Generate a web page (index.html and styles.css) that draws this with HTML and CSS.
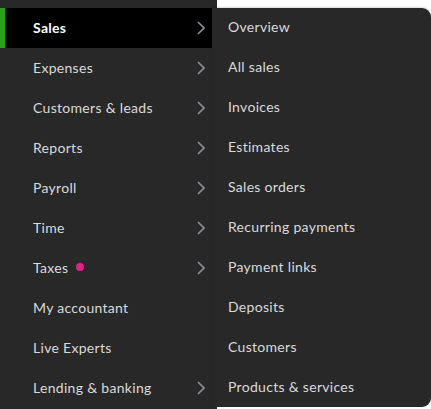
FILE: index.html
```html
<!DOCTYPE html>
<html lang="en">
<head>
  <meta charset="UTF-8">
  <meta name="viewport" content="width=device-width, initial-scale=1.0">
  <title>Navigation</title>
  <link rel="stylesheet" href="styles.css">
</head>
<body>
  <div class="page">
    <nav class="sidebar">
      <div class="nav-item active"><span class="label">Sales</span><svg class="chev" viewBox="0 0 8 14"><path d="M1 1l6 6-6 6"/></svg></div>
      <div class="nav-item"><span class="label">Expenses</span><svg class="chev" viewBox="0 0 8 14"><path d="M1 1l6 6-6 6"/></svg></div>
      <div class="nav-item"><span class="label">Customers &amp; leads</span><svg class="chev" viewBox="0 0 8 14"><path d="M1 1l6 6-6 6"/></svg></div>
      <div class="nav-item"><span class="label">Reports</span><svg class="chev" viewBox="0 0 8 14"><path d="M1 1l6 6-6 6"/></svg></div>
      <div class="nav-item"><span class="label">Payroll</span><svg class="chev" viewBox="0 0 8 14"><path d="M1 1l6 6-6 6"/></svg></div>
      <div class="nav-item"><span class="label">Time</span><svg class="chev" viewBox="0 0 8 14"><path d="M1 1l6 6-6 6"/></svg></div>
      <div class="nav-item"><span class="label">Taxes <span class="dot"></span></span><svg class="chev" viewBox="0 0 8 14"><path d="M1 1l6 6-6 6"/></svg></div>
      <div class="nav-item"><span class="label">My accountant</span></div>
      <div class="nav-item"><span class="label">Live Experts</span></div>
      <div class="nav-item"><span class="label">Lending &amp; banking</span><svg class="chev" viewBox="0 0 8 14"><path d="M1 1l6 6-6 6"/></svg></div>
    </nav>

    <div class="flyout">
      <div class="sub-item">Overview</div>
      <div class="sub-item">All sales</div>
      <div class="sub-item">Invoices</div>
      <div class="sub-item">Estimates</div>
      <div class="sub-item">Sales orders</div>
      <div class="sub-item">Recurring payments</div>
      <div class="sub-item">Payment links</div>
      <div class="sub-item">Deposits</div>
      <div class="sub-item">Customers</div>
      <div class="sub-item">Products &amp; services</div>
    </div>
  </div>
</body>
</html>
```

FILE: styles.css
```css
body {
  margin: 0;
  background-color: #fff;
  font-family: Lato, "Open Sans", sans-serif;
  font-size: 14px;
  letter-spacing: 0.3px;
}

.page {
  position: relative;
  width: 431px;
  height: 409px;
  overflow: hidden;
}

.sidebar {
  width: 217px;
  height: 409px;
  padding-top: 8px;
  box-sizing: border-box;
  background-color: #282828;
}

.nav-item {
  display: flex;
  align-items: center;
  justify-content: space-between;
  width: 212px;
  height: 40px;
  padding: 0 7px 2px 33px;
  box-sizing: border-box;
  color: #d9dadc;
}

.nav-item.active {
  background-color: #000;
  color: #fff;
  font-weight: 700;
  box-shadow: inset 5px 0 0 #2ca01c;
}

.label {
  display: flex;
  align-items: center;
}

.dot {
  display: inline-block;
  width: 8px;
  height: 8px;
  margin-left: 8px;
  border-radius: 50%;
  background-color: #e0218a;
}

.chev {
  width: 8px;
  height: 14px;
  margin-top: 2px;
  fill: none;
  stroke: #8d9096;
  stroke-width: 1.6;
}

/* flyout sits over the sidebar edge */
.flyout {
  position: absolute;
  left: 212px;
  top: 8px;
  width: 219px;
  height: 399px;
  background-color: #282828;
  border-radius: 0 9px 9px 0;
  box-shadow: 0 -1px 2px rgba(0, 0, 0, 0.15);
}

.sub-item {
  height: 40px;
  line-height: 38px;
  padding-left: 16px;
  color: #d9dadc;
}
```
